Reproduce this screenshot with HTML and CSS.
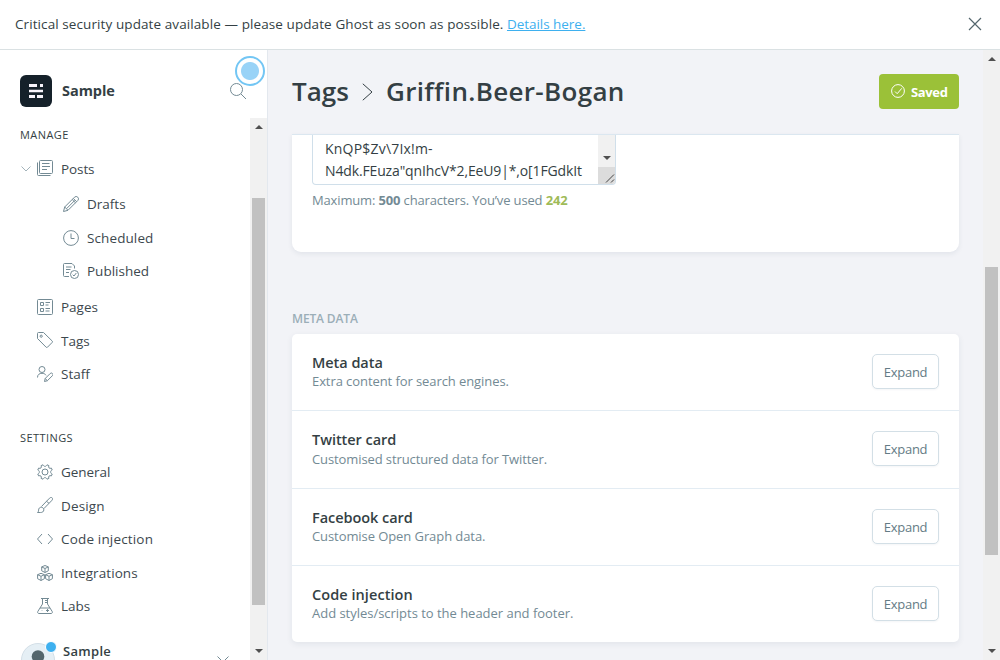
FILE: index.html
```html
<!DOCTYPE html>
<html lang="en">
<head>
<meta charset="utf-8">
<title>Tags - Griffin.Beer-Bogan</title>
<link rel="stylesheet" href="styles.css">
</head>
<body>
<div class="app">
  <aside class="alert">
    <p class="alert-text"><span class="alert-msg">Critical security update available — please update Ghost as soon as possible.</span> <a class="alert-link" href="#">Details here.</a></p>
    <svg class="alert-close" viewBox="0 0 14 14"><path d="M1 1l12 12M13 1L1 13"/></svg>
  </aside>
  <div class="body">
    <nav class="nav">
      <header class="nav-head">
        <svg class="logo" viewBox="0 0 32 32"><rect width="32" height="32" rx="6" fill="#15212a"/><path d="M9 9h8v3H9zM20 9h3v3h-3zM9 14.700h14v2.600H9zM9 20h6v3H9zM17 20h6v3h-6z" fill="#f7f4fb"/></svg>
        <span class="site-name">Sample</span>
        <svg class="search icon" viewBox="0 0 16 16"><circle cx="6.500" cy="6.500" r="6"/><path d="M11 11l5 5"/></svg>
        <span class="beacon"></span>
      </header>
      <div class="nav-body">
        <div class="nav-menu">
          <h4 class="nav-title">Manage</h4>
          <ul class="nav-list">
            <li class="nav-item"><svg class="chev icon" viewBox="0 0 10 6"><path d="M.5 .5L5 5 9.500 .5"/></svg><svg class="icon up" viewBox="0 0 16 16"><rect x="2.500" y=".5" width="13" height="13" rx="1"/><path d="M.5 2.500V14.500a1 1 0 0 0 1 1H13.500M5 3.500h7.500M5 6.500h8M5 9.500h5"/></svg><span class="t-posts">Posts</span></li>
          </ul>
          <ul class="nav-list nav-sub">
            <li class="nav-item"><svg class="icon" viewBox="0 0 16 16"><path d="M.5 15.500l1.200-4.500L11.500 1.200a2.300 2.300 0 0 1 3.300 3.300L5 14.300zM1.700 11L5 14.300M10.300 2.400l3.300 3.300M3.600 12.600l8.200-8.200M9.200 3.500l3.300 3.300"/></svg><span class="t-drafts">Drafts</span></li>
            <li class="nav-item"><svg class="icon" viewBox="0 0 16 16"><circle cx="8" cy="8" r="7.400"/><path d="M8 3.500V8.500H11.500"/></svg><span class="t-scheduled">Scheduled</span></li>
            <li class="nav-item"><svg class="icon" viewBox="0 0 16 16"><path d="M6 13.500H1.500a1 1 0 0 1-1-1V1.500a1 1 0 0 1 1-1H9l2.500 2.500V5.500M3 4h5.500M3 6.500h4.500M3 9.500h3"/><circle cx="11.500" cy="11.500" r="4"/><path d="M9.700 11.700l1.300 1.300 2.300-3"/></svg><span class="t-published">Published</span></li>
          </ul>
          <ul class="nav-list nav-rest">
            <li class="nav-item"><svg class="icon" viewBox="0 0 16 16"><rect x=".5" y=".5" width="15" height="15" rx="1"/><path d="M3.500 3.500h3v3h-3zM3.500 9.500h3v3h-3zM8.500 3.500h4.500M8.500 6h3M8.500 9.500h4.500M8.500 12h4"/></svg><span class="t-pages">Pages</span></li>
            <li class="nav-item"><svg class="icon up" viewBox="0 0 16 16"><path d="M.5 1.500a1 1 0 0 1 1-1H6.500L15.200 9a1 1 0 0 1 0 1.400L10.500 15.200a1 1 0 0 1-1.400 0L.5 6.500z"/><circle cx="4.200" cy="4.200" r="1.100"/></svg><span class="t-tags">Tags</span></li>
            <li class="nav-item"><svg class="icon" viewBox="0 0 16 16"><circle cx="5" cy="3.500" r="3"/><path d="M.5 11.500C.5 8.500 2.500 7.300 5 7.300c1.800 0 3.200.6 4 2M7.500 15.500l.7-3 5-5a1.500 1.500 0 0 1 2.200 2.200l-5 5zM8.200 12.500l2.200 2.200"/></svg><span class="t-staff">Staff</span></li>
          </ul>
          <h4 class="nav-title nav-title-settings">Settings</h4>
          <ul class="nav-list">
            <li class="nav-item"><svg class="icon" viewBox="0 0 16 16"><path d="M6 .8C6.800 2.900 9.200 2.900 10 .8L11.900 1.600C11 3.600 12.400 5 14.400 4.100L15.200 6C13.100 6.800 13.100 9.200 15.200 10L14.400 11.900C12.400 11 11 12.400 11.900 14.400L10 15.200C9.200 13.100 6.800 13.100 6 15.200L4.100 14.400C5 12.400 3.600 11 1.600 11.900L.8 10C2.900 9.200 2.900 6.800 .8 6L1.600 4.100C3.600 5 5 3.600 4.100 1.600Z"/><circle cx="8" cy="8" r="3"/></svg><span class="t-general">General</span></li>
            <li class="nav-item"><svg class="icon" viewBox="0 0 16 16"><path d="M.5 15.500c1.400-.8.8-2.300 1.300-3.600a2.600 2.600 0 1 1 4 3C4.500 15.800 2.500 15.500.5 15.500zM4.500 9.500l8-8.300C13.400.3 14.500.3 15.200.9s.5 1.700-.7 2.900L6.800 11.700M9.500 4.300l2.500 2"/></svg><span class="t-design">Design</span></li>
            <li class="nav-item"><svg class="icon" viewBox="0 0 16 16"><path d="M5 3L.5 8 5 13M11 3l4.500 5L11 13"/></svg><span class="t-code">Code injection</span></li>
            <li class="nav-item"><svg class="icon" viewBox="0 0 16 16"><path d="M8 .5l3.300 1.400v3.900L8 7.500 4.700 5.800V1.900zM4.700 1.900L8 3.500l3.300-1.600M8 3.500v4M4 8.300l3.400 1.400v4L4 15.500.6 13.700v-4zM.6 9.700L4 11.300l3.400-1.600M4 11.300v4.200M12 8.300l3.400 1.400v4L12 15.500l-3.400-1.800v-4zM8.600 9.700l3.400 1.600 3.400-1.600M12 11.300v4.200"/></svg><span class="t-integrations">Integrations</span></li>
            <li class="nav-item"><svg class="icon" viewBox="0 0 16 16"><path d="M4 .5h8M5.500 .5V6L.8 13.500a1.300 1.300 0 0 0 1 2H14.200a1.300 1.300 0 0 0 1-2L10.500 6V.5M3 10h10M8 2.500h2.500M8 4.500h2.500M10.500 11v3M9 12.500h3M5 12.500v.5"/></svg><span class="t-labs">Labs</span></li>
          </ul>
          <div class="user">
            <span class="avatar"><svg viewBox="0 0 34 34"><circle cx="17" cy="17" r="16.500" fill="#e5eff5" stroke="#d3dfe7"/><circle cx="17" cy="13.500" r="6.300" fill="#54666d"/></svg><i class="dot"></i></span>
            <span class="user-name">Sample</span>
            <svg class="user-chev icon" viewBox="0 0 12 8"><path d="M.5 .5L6 6 11.500 .5"/></svg>
          </div>
        </div>
        <div class="bar bar-nav"><i class="arrow-up"></i><i class="thumb"></i><i class="arrow-down"></i></div>
      </div>
    </nav>
    <main class="main">
      <section class="content">
        <header class="page-head">
          <h2 class="page-title"><span class="t-crumb">Tags</span><svg class="crumb-sep" viewBox="0 0 11 18"><path d="M.8 .8L10 9 .8 17.200"/></svg><span class="t-page">Griffin.Beer-Bogan</span></h2>
          <button class="saved"><svg viewBox="0 0 14 14"><circle cx="7" cy="7" r="6.400"/><path d="M4 7.500l2.200 2.200L10.800 4.300"/></svg><span>Saved</span></button>
        </header>
        <div class="panel">
          <div class="area">
            <div class="area-text"><div class="t-l1">KnQP$Zv\7Ix!m-</div><div class="t-l2">N4dk.FEuza"qnIhcV*2,EeU9|*,o[1FGdkIt</div></div>
            <div class="area-bar"><i class="arrow-down"></i><svg class="grip" viewBox="0 0 17 17"><path d="M8 15.500l8-8M13 15.500l3-3"/></svg></div>
          </div>
          <p class="hint">Maximum: <b>500</b> characters. You’ve used <b class="count">242</b></p>
        </div>
        <h4 class="section-title"><span>Meta data</span></h4>
        <div class="cards">
          <div class="card"><div><h3 class="c1">Meta data</h3><p class="p1">Extra content for search engines.</p></div><button class="expand">Expand</button></div>
          <div class="card"><div><h3 class="c2">Twitter card</h3><p class="p2">Customised structured data for Twitter.</p></div><button class="expand">Expand</button></div>
          <div class="card"><div><h3 class="c3">Facebook card</h3><p class="p3">Customise Open Graph data.</p></div><button class="expand">Expand</button></div>
          <div class="card"><div><h3 class="c4">Code injection</h3><p class="p4">Add styles/scripts to the header and footer.</p></div><button class="expand">Expand</button></div>
        </div>
      </section>
      <div class="bar bar-main"><i class="arrow-up"></i><i class="thumb"></i><i class="arrow-down"></i></div>
    </main>
  </div>
</div>
</body>
</html>
```
FILE: styles.css
```css
* { box-sizing: border-box; margin: 0; padding: 0; }
body { width: 1000px; height: 660px; overflow: hidden; background: #fff; color: #343f44; font: 14px/20px "Open Sans", "Noto Sans", sans-serif; }
ul { list-style: none; }
button { font: inherit; }
svg { display: block; flex: none; }
i { display: block; }

.app { height: 660px; display: flex; flex-direction: column; }
.alert { height: 50px; flex: none; display: flex; justify-content: space-between; align-items: center; padding: 0 18px 2px 15px; border-bottom: 1px solid #dae1e3; }
.alert-text { font-size: 13.500px; letter-spacing: -0.040px; white-space: nowrap; }
.alert-msg { letter-spacing: 0.090px; }
.alert-link { color: #3eb0ef; text-decoration: underline; }
.alert-close { width: 14px; height: 14px; stroke: #54666d; fill: none; stroke-width: 1.200; }
.body { flex: 1; min-height: 0; display: flex; }

.nav { width: 268px; flex: none; border-right: 1px solid #e3e8ee; display: flex; flex-direction: column; }
.nav-head { position: relative; height: 68px; flex: none; display: flex; align-items: center; padding: 13px 21px 0 20px; }
.logo { width: 32px; height: 32px; }
.site-name { margin-left: 10px; flex: 1; font-size: 14.500px; font-weight: 700; letter-spacing: -0.050px; }
.icon { width: 16px; height: 16px; fill: none; stroke: #738a94; stroke-width: 1; stroke-linejoin: round; }
.beacon { position: absolute; left: 235px; top: 6px; width: 30px; height: 30px; border: 2px solid #73c6f4; border-radius: 50%; background: radial-gradient(circle, #99d3f7 0 8.500px, #fff 9.500px); }
.nav-body { flex: 1; min-height: 0; display: flex; }
.nav-menu { flex: 1; overflow: hidden; }
.nav-title { padding: 7px 0 0 20px; height: 34px; font-size: 11px; font-weight: 400; text-transform: uppercase; letter-spacing: 0.420px; }
.nav-title-settings { margin-top: 30px; }
.nav-item { display: flex; align-items: center; height: 33.600px; padding-left: 37px; color: #3c484e; font-size: 13.500px; }
.nav-item .icon + span { margin-left: 8px; }
.nav-item .chev { width: 10px; height: 6px; margin: 0 6px 0 -16px; stroke: #a3b3ba; }
.nav-sub { margin-top: 1.900px; }
.nav-sub .nav-item { padding-left: 63px; }
.nav-rest { margin-top: 2px; }
.nav-item .up { margin-top: -2px; }
.t-posts { letter-spacing: -0.100px; }
.t-scheduled { letter-spacing: 0.100px; }
.t-general { letter-spacing: -0.050px; }
.t-design { padding-top: 1px; letter-spacing: 0.150px; }
.t-code { letter-spacing: 0.170px; }
.t-integrations { letter-spacing: 0.070px; }
.user { display: flex; margin-top: 18px; padding: 0 21px; }
.avatar { position: relative; width: 34px; height: 34px; margin-top: 2px; }
.dot { position: absolute; right: -2px; top: -2px; width: 12px; height: 12px; border: 1px solid #fff; border-radius: 50%; background: #3eb0ef; }
.user-name { margin-left: 8px; flex: 1; font-size: 13px; font-weight: 600; letter-spacing: 0.300px; }
.user-chev { width: 12px; height: 8px; margin-top: 15px; }

.bar { width: 17px; flex: none; background: #f1f1f1; display: flex; flex-direction: column; align-items: center; }
.arrow-up, .arrow-down { width: 0; height: 0; border: 4px solid transparent; }
.arrow-up { border-top: 0; border-bottom-color: #505050; }
.arrow-down { border-bottom: 0; border-top-color: #505050; }
.thumb { width: 13px; background: #c1c1c1; }
.bar .arrow-down { margin-top: auto; margin-bottom: 7px; }
.bar-nav { padding-top: 7px; }
.bar-nav .thumb { height: 407px; margin-top: 69px; }
.bar-main { padding-top: 7px; }
.bar-main .thumb { height: 288px; margin-top: 206px; }

.main { flex: 1; display: flex; background: #f2f3f7; min-width: 0; }
.content { flex: 1; padding: 0 24px; min-width: 0; }
.page-head { height: 84px; display: flex; align-items: center; justify-content: space-between; padding-bottom: 2px; }
.page-title { display: flex; align-items: center; font-size: 26px; line-height: 32px; font-weight: 600; white-space: nowrap; }
.t-crumb { width: 57px; }
.t-page { letter-spacing: 0.330px; }
.crumb-sep { width: 11px; height: 18px; margin: 2px 13px 0; fill: none; stroke: #343f44; }
.saved { width: 80px; height: 35px; display: flex; align-items: center; padding-left: 12px; border: 0; border-radius: 4px; background: #9bc138; color: #fff; font-size: 13px; font-weight: 700; letter-spacing: -0.350px; }
.saved span { padding-top: 2px; }
.saved svg { width: 14px; height: 14px; margin-right: 6px; fill: none; stroke: #fff; }
.panel { height: 118px; padding-left: 20px; background: #fff; border-top: 1px solid #dbe7f0; border-radius: 0 0 9px 9px; box-shadow: 0 2px 5px rgba(40,60,90,.08); }
.area { width: 304px; height: 50px; display: flex; justify-content: space-between; overflow: hidden; border: 1px solid #d0dfea; border-top: 0; border-radius: 0 0 4px 4px; }
.area-text { padding: 3px 0 0 12px; font-size: 14px; line-height: 22px; white-space: nowrap; }
.t-l1 { letter-spacing: 0.200px; }
.t-l2 { letter-spacing: -0.140px; }
.area-bar { width: 17px; background: #f1f1f1; display: flex; flex-direction: column; align-items: center; justify-content: space-between; padding-top: 21px; }
.grip { width: 17px; height: 17px; background: #dcdcdc; stroke: #444; fill: none; }
.hint { margin-top: 5px; font-size: 13px; line-height: 20px; letter-spacing: -0.150px; color: #738a94; white-space: nowrap; }
.hint .count { color: #9fbb58; }
.section-title { margin-top: 57px; height: 25px; font-size: 12px; font-weight: 600; line-height: 20px; letter-spacing: -0.150px; text-transform: uppercase; color: #9baeb8; }
.cards { background: #fff; border-radius: 5px; box-shadow: 0 2px 6px rgba(40,60,90,.08); height: 308px; display: grid; grid-template-rows: 77px 78px 77px 76px; }
.card { display: flex; justify-content: space-between; padding: 20px 20px 0; border-bottom: 1px solid #e3ecf3; white-space: nowrap; }
.card:last-child { border-bottom: 0; }
.card h3 { font-size: 14.500px; line-height: 18px; font-weight: 600; letter-spacing: -0.050px; }
.card .c4 { letter-spacing: 0.060px; }
.card p { font-size: 13px; line-height: 19px; letter-spacing: -0.080px; color: #738a94; }
.card .p2 { padding-top: 1px; letter-spacing: -0.100px; }
.card .p4 { letter-spacing: -0.020px; }
.expand { width: 67px; height: 35px; border: 1px solid #d3dfe6; border-radius: 5px; background: #fff; color: #647b85; font-size: 13px; letter-spacing: -0.250px; box-shadow: 0 1px 2px rgba(40,60,90,.05); }
```
